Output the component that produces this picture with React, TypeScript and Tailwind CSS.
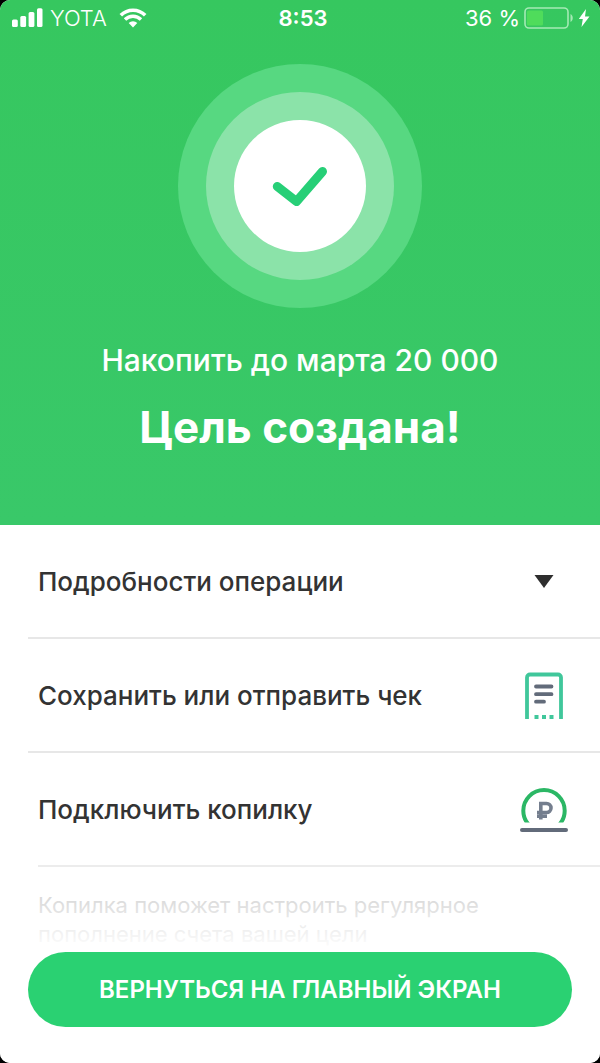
import { useState } from "react";
import type { ReactNode } from "react";

function StatusBar() {
  return (
    <div className="grid grid-cols-3 items-center pt-1 pr-1.5 pl-3 text-[22px] leading-7 text-white">
      <div className="flex items-center gap-1.5">
        <svg className="h-5 w-8 shrink-0" viewBox="0 0 32 20" fill="currentColor" aria-hidden="true">
          <rect x="0" y="11.5" width="5.8" height="7.5" rx="1.5" />
          <rect x="8.300" y="8" width="5.8" height="11" rx="1.5" />
          <rect x="16.600" y="4" width="5.8" height="15" rx="1.5" />
          <rect x="25" y="0.200" width="5.5" height="18.800" rx="1.5" />
        </svg>
        <span className="font-light">YOTA</span>
        <svg className="ml-1.5 h-5 w-7 shrink-0" viewBox="0 0 28 20" fill="none" stroke="currentColor" aria-hidden="true">
          <path d="M1.8 7.3a17.2 17.2 0 0 1 24.4 0" strokeWidth="3.6" />
          <path d="M6 11.5a11.3 11.3 0 0 1 16 0" strokeWidth="3.4" />
          <path d="M14 19.4 9.7 15.1a6.1 6.1 0 0 1 8.6 0Z" fill="currentColor" stroke="none" />
        </svg>
      </div>
      <div className="text-center font-semibold">8:53</div>
      <div className="flex items-center justify-end gap-1 pr-1">
        <span className="whitespace-nowrap">36 %</span>
        <svg className="h-[22px] w-[50px] shrink-0" viewBox="0 0 50 22" aria-hidden="true">
          <rect x="1" y="1" width="43" height="20" rx="4" fill="none" stroke="#a5eab5" strokeWidth="1.6" />
          <rect x="3" y="3.5" width="16" height="15" rx="1.5" fill="#4fdc5b" />
          <path d="M46.5 7c3 1.500 3 6.500 0 8Z" fill="#a5eab5" />
        </svg>
        <svg className="h-5 w-3 shrink-0" viewBox="0 0 12 20" fill="currentColor" aria-hidden="true">
          <path d="M8 1 0.800 11h4L3.500 19 11.500 8.500H7Z" />
        </svg>
      </div>
    </div>
  );
}

function SuccessMark() {
  return (
    <div className="mx-auto mt-8 flex size-[244px] items-center justify-center rounded-full bg-[#57d881]">
      <div className="flex size-[188px] items-center justify-center rounded-full bg-[#8be3a9]">
        <div className="flex size-[132px] items-center justify-center rounded-full bg-white">
          <svg className="h-10 w-14" viewBox="0 0 56 40" fill="none" stroke="#27cf77" strokeWidth="9" strokeLinecap="round" strokeLinejoin="round" aria-hidden="true">
            <path d="M5.300 20.500 24.500 35.500 50.500 5.500" />
          </svg>
        </div>
      </div>
    </div>
  );
}

function ReceiptIcon() {
  return (
    <svg className="h-12 w-10" viewBox="0 0 40 48" fill="none" aria-hidden="true">
      <path d="M3 47V5.500A3 3 0 0 1 6 2.500H34A3 3 0 0 1 37 5.500V47" stroke="#40c79b" strokeWidth="3.800" />
      <path d="M12 14.500H27.500M12 22.200H27.500M12 29.700H20" stroke="#626b7a" strokeWidth="3.800" strokeLinecap="round" />
      <path d="M10.500 45h4M18 45h4M25.500 45h4" stroke="#40c79b" strokeWidth="4" />
    </svg>
  );
}

function MoneyBoxIcon() {
  return (
    <svg className="h-11 w-12" viewBox="0 0 48 44" fill="none" aria-hidden="true">
      <clipPath id="money-box-dome">
        <path d="M0 0H48V34.500H0Z" />
      </clipPath>
      <circle cx="24" cy="22.700" r="20.700" stroke="#2bb765" strokeWidth="4" clipPath="url(#money-box-dome)" />
      <path d="M20.800 31.500V15.500H26.500A4.300 4.300 0 0 1 26.500 24.500H17M17 28.300H27" stroke="#747e8e" strokeWidth="3.600" />
      <path d="M2 42H46" stroke="#626b7a" strokeWidth="4" strokeLinecap="round" />
    </svg>
  );
}

function ActionRow({ label, icon, onClick }: { label: string; icon: ReactNode; onClick?: () => void }) {
  return (
    <button type="button" onClick={onClick} className="flex h-28 w-full items-center justify-between pt-0.5 pr-8 pl-[38px] text-left text-[26px] leading-8 font-medium text-[#333333]">
      <span>{label}</span>
      <span className="flex w-12 shrink-0 justify-center">{icon}</span>
    </button>
  );
}

export default function App() {
  const [open, setOpen] = useState(false);

  return (
    <div className="bg-black font-['Inter','Liberation_Sans',sans-serif]">
      <main className="flex min-h-screen flex-col overflow-clip rounded-[10px] bg-white">
        <header className="bg-linear-to-b from-[#36c75f] to-[#39c869] pb-[71px] text-center text-white">
          <StatusBar />
          <SuccessMark />
          <p className="mt-8 text-[30px] leading-10 font-medium">Накопить до марта 20 000</p>
          <h1 className="mt-5 text-[44px] leading-[54px] font-bold">Цель создана!</h1>
        </header>

        <section>
          <ActionRow
            label="Подробности операции"
            onClick={() => setOpen(!open)}
            icon={
              <svg className={open ? "h-3.5 w-5 rotate-180" : "h-3.5 w-5"} viewBox="0 0 20 14" fill="#2e2e2e" aria-hidden="true">
                <path d="M0.500 0H19.500L10 13Z" />
              </svg>
            }
          />
          <div className="ml-7 h-0.5 bg-[#e7e7e7]" />
          <ActionRow label="Сохранить или отправить чек" icon={<ReceiptIcon />} />
          <div className="ml-7 h-0.5 bg-[#e7e7e7]" />
          <ActionRow label="Подключить копилку" icon={<MoneyBoxIcon />} />
          <div className="ml-[38px] h-0.5 bg-[#ececec]" />
          <p className="px-[38px] pt-6 text-[22px] leading-[29px] text-[#bbbbbb]">
            Копилка поможет настроить регулярное<br />пополнение счета вашей цели
          </p>
        </section>

        <footer className="sticky bottom-0 mt-auto bg-white px-7 pb-9">
          <div className="pointer-events-none absolute inset-x-0 bottom-full h-20 bg-linear-to-b from-white/20 to-white" />
          <button type="button" className="relative h-[75px] w-full rounded-full bg-[#2ad172] text-[24px] leading-7 font-semibold text-white">
            ВЕРНУТЬСЯ НА ГЛАВНЫЙ ЭКРАН
          </button>
        </footer>
      </main>
    </div>
  );
}
